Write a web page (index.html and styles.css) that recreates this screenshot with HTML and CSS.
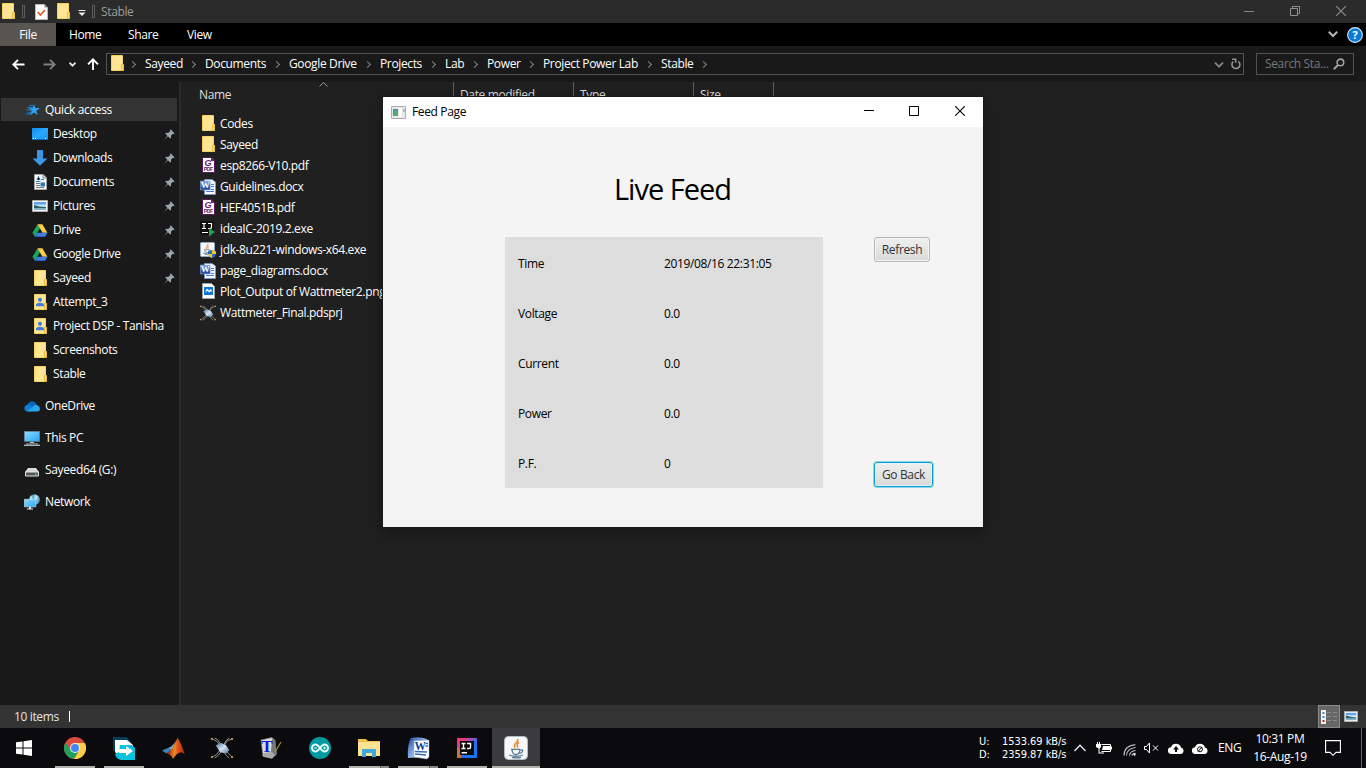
FILE: index.html
```html
<!DOCTYPE html>
<html lang="en">
<head>
<meta charset="utf-8">
<title>Stable</title>
<link rel="stylesheet" href="styles.css">
</head>
<body>
<svg class="defs" width="0" height="0" aria-hidden="true">
  <defs>
    <linearGradient id="gFolder" x1="0" y1="0" x2="1" y2="1"><stop offset="0" stop-color="#ffe38b"/><stop offset="1" stop-color="#ffe79f"/></linearGradient>
    <linearGradient id="gDesk" x1="0" y1="0" x2="1" y2="1"><stop offset="0" stop-color="#0d8cf0"/><stop offset=".5" stop-color="#2aa9ff"/><stop offset="1" stop-color="#1595f5"/></linearGradient>
    <linearGradient id="gScreen" x1="0" y1="0" x2="1" y2="1"><stop offset="0" stop-color="#8fdcff"/><stop offset="1" stop-color="#28a5f5"/></linearGradient>
    <linearGradient id="gWord" x1="0" y1="0" x2="0" y2="1"><stop offset="0" stop-color="#6f9fe6"/><stop offset="1" stop-color="#1f3f8f"/></linearGradient>
    <linearGradient id="gWord2" x1="0" y1="0" x2="1" y2="1"><stop offset="0" stop-color="#28468f"/><stop offset=".45" stop-color="#7ba3dc"/><stop offset="1" stop-color="#e4eefb"/></linearGradient>
    <linearGradient id="gIj" x1="0" y1="0" x2="1" y2="1"><stop offset="0" stop-color="#fc3162"/><stop offset=".3" stop-color="#d6409f"/><stop offset=".55" stop-color="#2e6bf0"/><stop offset="1" stop-color="#087cfa"/></linearGradient>
    <linearGradient id="gMat" x1="0" y1="0" x2="1" y2="0"><stop offset="0" stop-color="#8a1c10"/><stop offset=".45" stop-color="#f08a24"/><stop offset=".6" stop-color="#e5531c"/><stop offset="1" stop-color="#9a2512"/></linearGradient>
    <linearGradient id="gChip" x1="0" y1="0" x2="1" y2="1"><stop offset="0" stop-color="#4a6f97"/><stop offset=".5" stop-color="#d3e4f1"/><stop offset="1" stop-color="#56789b"/></linearGradient>
    <symbol id="folder" viewBox="0 0 13 16"><path fill="url(#gFolder)" stroke="#f4d25f" d="M.5.5h11v9h1v6H.5z"/><path fill="#ffd95e" stroke="#e2b63c" stroke-width=".8" d="M10.4 9.5h2.1v6h-2.1z"/></symbol>
    <symbol id="shared" viewBox="0 0 13 16"><use href="#folder" width="13" height="16"/><circle cx="6" cy="5.8" r="2.1" fill="#3c7de6"/><path fill="#3c7de6" d="M2 12.2V11c0-1.300 2-2.200 4-2.200s4 .9 4 2.200v1.200z"/></symbol>
    <symbol id="star" viewBox="0 0 16 14"><path fill="#2da5f4" d="M9 1l1.300 4H15l-3.800 2.700L12.800 12 9 9.500 5 12.500l1.700-4.600L3.500 5.300h4.300z"/><path stroke="#1c8ae0" stroke-width=".8" d="M2 4.500h6M1 7h6M3 9.300h4M1 11h5M4 2.500h4"/></symbol>
    <symbol id="desktop" viewBox="0 0 16 12"><path fill="url(#gDesk)" d="M0 0h16v12H0z"/><path stroke="#0766bd" d="M0 11.500h16"/><path stroke="#fff" stroke-dasharray="1 1" d="M1 10.500h4m8 0h2"/></symbol>
    <symbol id="down" viewBox="0 0 16 16"><path fill="#3b96e6" d="M5 0h6v8.500h4.500L8 15.700.5 8.500H5z"/></symbol>
    <symbol id="doc" viewBox="0 0 13 16"><path fill="#f7f7f7" stroke="#a5a5a5" d="M.5.500h8.500l3.500 3.500v11.500H.5z"/><path d="M9 .5V4h3.500" fill="#ddd" stroke="#888"/><path stroke="#2580c8" d="M3 6l1.500-3.500L6 6M2 7.500h4.500M7 5.500h3"/><path stroke="#777" d="M2 9.500h4M2 11.500h4M2 13.500h8"/><path fill="#2e78ae" d="M6.500 8.500H11v4H6.500z"/></symbol>
    <symbol id="pic" viewBox="0 0 16 12"><path fill="#f8f8f8" stroke="#adadad" d="M.5.500h15v11H.5z"/><path fill="#62a2ee" d="M2 2h12v3H2z"/><path fill="#c6e2f9" d="M2 4.500h12v2H2z"/><path fill="#285f63" d="M2 5q5 2 12 2v1.500H2z"/><path fill="#83b1c6" d="M2 8h12v2H2z"/></symbol>
    <symbol id="drive" viewBox="0 0 15 13"><path fill="#1ea362" d="M5 .3L0 8.800l2.400 3.900L7.500 4.300z"/><path fill="#ffcf48" d="M5 .3h4.900l5 8.500H10z"/><path fill="#3f7de8" d="M4.900 8.800H15l-2.500 3.900H2.500z"/></symbol>
    <symbol id="cloud" viewBox="0 0 16 11"><path fill="#0a63bd" d="M4 9a4 4 0 0 1-.2-6.200A5 5 0 0 1 12.500 3Q10 9 4 9z"/><path fill="#0f7ed8" d="M3.500 10.500A3.300 3.300 0 0 1 3 4q3-.8 5 1.500l-3 5z"/><path fill="#29a4ee" d="M3 10.500L9.500 5q2-2.300 4.300-.4Q16 5.500 16 8q-.2 2.500-2.800 2.500z"/></symbol>
    <symbol id="pc" viewBox="0 0 16 15"><path fill="url(#gScreen)" stroke="#6f8795" stroke-width=".7" d="M.4.400h15.200v10H.4z"/><path fill="#bac7ce" d="M6 11h4v1H6zM2 12.500h12v.8H2z"/><path fill="#edf3f7" d="M0 13.700h16v1H0z"/></symbol>
    <symbol id="hdd" viewBox="0 0 14 9"><path fill="#d9d9d9" d="M3 0h8l3 4H0z"/><path fill="#555" stroke="#e4e4e4" d="M.5 4h13v4H.5z"/><path fill="#19e84f" d="M10 5.500h1.600v1.400H10z"/></symbol>
    <symbol id="net" viewBox="0 0 16 16"><circle cx="10.500" cy="5.500" r="5.300" fill="#5fa9cf"/><path fill="#b8dce9" d="M7 1.500Q10 4 7 7L5.500 4zM11 .5l3 2-1 4-3-2z"/><path fill="url(#gScreen)" stroke="#d5eaf5" stroke-width=".6" d="M.3 5.300h11.500v7.500H.3z"/><path fill="#dce7ed" d="M5 13h2v1.500h2v1H3v-1h2z"/></symbol>
    <symbol id="pin" viewBox="0 0 11 11"><path fill="#9aa5ac" d="M6.500.3l4.200 4.100-1 .6-.8-.2-2 2 .2 2-.9.8-2.300-2.300L.4 10.800l2.900-4L1.200 4.600l.8-.9 2.200.2 2-1.900-.2-.9z"/></symbol>
    <symbol id="pdf" viewBox="0 0 13 16"><path fill="#fff" stroke="#5c145c" d="M.5.500H9L12.500 4v11.500H.5z"/><path fill="#6a2469" d="M9 0l4 4H9z"/><text x="2.600" y="9" font-family="Liberation Sans" font-size="9" font-weight="700" font-style="italic" fill="#5c145c">G</text><text x="1.800" y="14.400" font-family="Liberation Sans" font-size="5" font-weight="700" fill="#5c145c">PDF</text></symbol>
    <symbol id="word" viewBox="0 0 16 16"><path fill="#f4f8fe" stroke="#7596c7" stroke-width=".8" d="M4.500.500H12L15.500 3v12.500h-11z"/><path stroke="#477dce" d="M11 5.500h3M11 7.500h3M6 12.500h8M11 10.500h3"/><path fill="url(#gWord)" stroke="#aac5ee" stroke-width=".5" d="M.3 2h10v9H.3z"/><text x=".8" y="9.300" font-family="Liberation Serif" font-size="9" font-weight="700" fill="#fff">W</text></symbol>
    <symbol id="ijexe" viewBox="0 0 16 16"><path fill="#101010" d="M0 0h14v14H0z"/><path stroke="#fff" stroke-width="1.200" fill="none" d="M2 2.500h4M4 2.500v5M2 7.500h4M8 2.500h3.500v4q0 1-1.500 1H8M2 11.500h6"/><path fill="#22a447" d="M9 7l6 4-6 4.500z"/></symbol>
    <symbol id="cup" viewBox="0 0 24 24"><path fill="none" stroke="#ec8a33" stroke-width="1.600" d="M13.500 3q1 2-1.500 4t-1 5M15 6.500q-3 1.500-1 5"/><path fill="none" stroke="#577a98" stroke-width="1.300" d="M7 13.300h9M8 13.500q.5 5 4 5t4-5M16.500 14q3-.5 2 1.500t-3 1.500M5 19q7 2.500 14 0M8 21.300q5 1 9 0"/></symbol>
    <symbol id="jdk" viewBox="0 0 16 16"><rect x=".5" y=".5" width="14" height="14" rx="1" fill="#f4f7f9" stroke="#94adbd"/><use href="#cup" width="14" height="14"/><path fill="#1f71c5" d="M12 8l4 1.500V12q-1 3-4 4-3-1-4-4V9.500z"/><path fill="#f5c62d" d="M12 8v4h4V9.500zM12 12v4q-3-1-4-4z"/></symbol>
    <symbol id="png" viewBox="0 0 13 16"><path fill="#fff" stroke="#a1a1a1" d="M.5.500H9.500l3 3v12H.5z"/><path fill="#0b79d3" d="M2 4h9v8H2z"/><path fill="#fff" d="M3 9l2-3.500 2 2L9 6l1.500 3-1.500-1L7.500 9.500 5.500 8z"/></symbol>
    <symbol id="proteus" viewBox="0 0 24 24"><path fill="none" stroke="#a9a9a5" stroke-width=".9" d="M1 2Q7 4 9 8M4 1q5 2 6 7M23 2q-6 1-8 6M20 1q-5 3-6 8M1 22q6-2 8-7M4 23q5-3 7-7M23 22q-4-5-8-7M20 23q-4-3-6-7"/><path fill="url(#gChip)" d="M5 9l6-2.500 5 2 4 6-4 3.500-6-1.500z"/><path fill="#d59d51" d="M0 1h2v2H0zM22 1h2v2h-2zM0 21h2v2H0zM22 21h2v2h-2z"/></symbol>
  </defs>
</svg>

<div class="screen">
  <header class="titlebar">
    <svg class="tb-folder" width="13" height="16"><use href="#folder"/></svg>
    <i class="bar"></i>
    <svg class="tb-check" width="13" height="16" viewBox="0 0 13 16"><path fill="#fff" stroke="#bcbcbc" d="M.5.500h9l3 3v12H.5z"/><path d="M9.500 0v3.500H13" fill="#888"/><path fill="none" stroke="#e85a22" stroke-width="1.800" d="M2.800 8l2.500 3 4.700-5"/></svg>
    <svg class="tb-folder2" width="13" height="16"><use href="#folder"/></svg>
    <svg class="tb-drop" width="8" height="6" viewBox="0 0 8 6"><path fill="#ededed" d="M.5 0h7v1h-7zM.5 2.500h7L4 6z"/></svg>
    <i class="bar"></i>
    <span class="tb-title">Stable</span>
    <div class="winctl">
      <svg width="10" height="10" viewBox="0 0 10 10"><path stroke="#858585" d="M0 5.500h10"/></svg>
      <svg width="10" height="10" viewBox="0 0 10 10" fill="none" stroke="#909090"><path d="M.5 2.500h7v7h-7zM2.500 2.500v-2h7v7h-2"/></svg>
      <svg width="10" height="10" viewBox="0 0 10 10"><path stroke="#909090" stroke-width="1.100" d="M0 0l10 10M10 0L0 10"/></svg>
    </div>
  </header>
  <nav class="menu">
    <span class="m-file">File</span><span class="m-home">Home</span><span class="m-share">Share</span><span class="m-view">View</span>
    <div class="m-right">
      <svg width="10" height="7" viewBox="0 0 10 7"><path fill="none" stroke="#b5b5b5" stroke-width="2" d="M.8.800L5 5 9.200.800"/></svg>
      <svg width="16" height="16" viewBox="0 0 16 16"><circle cx="8" cy="8" r="7.400" fill="#0b7ad5" stroke="#d5e7f5" stroke-width="1.100"/><text x="8" y="12" text-anchor="middle" font-family="Open Sans" font-weight="700" font-size="11" fill="#fff">?</text></svg>
    </div>
  </nav>
  <div class="navbar">
    <div class="arrows">
      <svg width="13" height="11" viewBox="0 0 13 11" fill="none" stroke="#fff" stroke-width="1.900"><path d="M12.500 5.500H1.500M6 .8L1.300 5.500 6 10.200"/></svg>
      <svg width="13" height="11" viewBox="0 0 13 11" fill="none" stroke="#7f7f7f" stroke-width="1.900"><path d="M.5 5.500h11M7 .8l4.700 4.700L7 10.200"/></svg>
      <svg width="7" height="5" viewBox="0 0 7 5" fill="none" stroke="#e5e5e5" stroke-width="1.700"><path d="M.5.700l3 3 3-3"/></svg>
      <svg width="12" height="12" viewBox="0 0 12 12" fill="none" stroke="#fff" stroke-width="1.900"><path d="M6 12V1.500M1 6.300l5-5 5 5"/></svg>
    </div>
    <div class="address">
      <svg class="ad-folder" width="13" height="16"><use href="#folder"/></svg>
      <i class="chev"></i>
      <div class="crumbs">
        <span>Sayeed<i class="chev"></i></span><span>Documents<i class="chev"></i></span><span>Google Drive<i class="chev"></i></span><span>Projects<i class="chev"></i></span><span>Lab<i class="chev"></i></span><span>Power<i class="chev"></i></span><span>Project Power Lab<i class="chev"></i></span><span>Stable<i class="chev"></i></span>
      </div>
      <svg class="ad-down" width="10" height="6" viewBox="0 0 10 6"><path fill="none" stroke="#858585" stroke-width="1.800" d="M1 .7l4 4 4-4"/></svg>
      <svg class="ad-ref" width="10" height="12" viewBox="0 0 10 12"><path fill="none" stroke="#919191" stroke-width="1.600" d="M7.300 3.300A4 4 0 1 1 2.300 3.500M1 1.200h3.700v3.600"/></svg>
    </div>
    <div class="search"><span>Search Sta...</span><svg width="12" height="12" viewBox="0 0 12 12"><circle cx="7.400" cy="4.400" r="3.300" fill="none" stroke="#a0a0a0" stroke-width="1.600"/><path stroke="#a0a0a0" stroke-width="2" d="M5 7L.8 11.200"/></svg></div>
  </div>

  <main class="main">
    <aside class="side">
      <div class="row root sel"><svg width="16" height="14"><use href="#star"/></svg><span>Quick access</span></div>
      <div class="row"><svg width="16" height="12"><use href="#desktop"/></svg><span>Desktop</span><svg class="pin" width="11" height="11"><use href="#pin"/></svg></div>
      <div class="row"><svg width="16" height="16"><use href="#down"/></svg><span>Downloads</span><svg class="pin" width="11" height="11"><use href="#pin"/></svg></div>
      <div class="row"><svg class="slim" width="13" height="16"><use href="#doc"/></svg><span>Documents</span><svg class="pin" width="11" height="11"><use href="#pin"/></svg></div>
      <div class="row"><svg width="16" height="12"><use href="#pic"/></svg><span>Pictures</span><svg class="pin" width="11" height="11"><use href="#pin"/></svg></div>
      <div class="row"><svg width="16" height="13"><use href="#drive"/></svg><span>Drive</span><svg class="pin" width="11" height="11"><use href="#pin"/></svg></div>
      <div class="row"><svg width="16" height="13"><use href="#drive"/></svg><span>Google Drive</span><svg class="pin" width="11" height="11"><use href="#pin"/></svg></div>
      <div class="row"><svg class="slim" width="13" height="16"><use href="#folder"/></svg><span>Sayeed</span><svg class="pin" width="11" height="11"><use href="#pin"/></svg></div>
      <div class="row"><svg class="slim" width="13" height="16"><use href="#shared"/></svg><span>Attempt_3</span></div>
      <div class="row"><svg class="slim" width="13" height="16"><use href="#shared"/></svg><span>Project DSP - Tanisha</span></div>
      <div class="row"><svg class="slim" width="13" height="16"><use href="#folder"/></svg><span>Screenshots</span></div>
      <div class="row"><svg class="slim" width="13" height="16"><use href="#folder"/></svg><span>Stable</span></div>
      <div class="row root gap"><svg width="16" height="11"><use href="#cloud"/></svg><span>OneDrive</span></div>
      <div class="row root gap"><svg width="16" height="15"><use href="#pc"/></svg><span>This PC</span></div>
      <div class="row root gap"><svg class="low" width="16" height="9"><use href="#hdd"/></svg><span>Sayeed64 (G:)</span></div>
      <div class="row root gap"><svg width="16" height="16"><use href="#net"/></svg><span>Network</span></div>
    </aside>
    <section class="files">
      <div class="cols">
        <span class="c-name">Name</span><span>Date modified</span><span>Type</span><span class="c-size">Size</span>
        <svg class="sort" width="9" height="5" viewBox="0 0 9 5"><path fill="none" stroke="#9a9a9a" d="M.5 4.500l4-4 4 4"/></svg>
      </div>
      <div class="list">
        <div class="file"><svg class="slim" width="13" height="16"><use href="#folder"/></svg><span>Codes</span></div>
        <div class="file"><svg class="slim" width="13" height="16"><use href="#folder"/></svg><span>Sayeed</span></div>
        <div class="file"><svg class="slim" width="13" height="16"><use href="#pdf"/></svg><span>esp8266-V10.pdf</span></div>
        <div class="file"><svg width="16" height="16"><use href="#word"/></svg><span>Guidelines.docx</span></div>
        <div class="file"><svg class="slim" width="13" height="16"><use href="#pdf"/></svg><span>HEF4051B.pdf</span></div>
        <div class="file"><svg width="16" height="16"><use href="#ijexe"/></svg><span>ideaIC-2019.2.exe</span></div>
        <div class="file"><svg width="16" height="16"><use href="#jdk"/></svg><span>jdk-8u221-windows-x64.exe</span></div>
        <div class="file"><svg width="16" height="16"><use href="#word"/></svg><span>page_diagrams.docx</span></div>
        <div class="file"><svg class="slim" width="13" height="16"><use href="#png"/></svg><span>Plot_Output of Wattmeter2.png</span></div>
        <div class="file"><svg width="16" height="16"><use href="#proteus"/></svg><span>Wattmeter_Final.pdsprj</span></div>
      </div>
    </section>
  </main>

  <footer class="status">
    <span>10 items</span><i></i>
    <div class="views">
      <span class="v-on"><svg width="18" height="14" viewBox="0 0 18 14"><path fill="#f2f2f2" d="M1 0h5v14H1z"/><path fill="#4d80b5" d="M2.500 2h2v2h-2z"/><path fill="#3891df" d="M2.500 6h2v2h-2z"/><path fill="#c62525" d="M2.500 10h2v2h-2z"/><path stroke="#8b8b8b" d="M7 2.500h4M7 6.500h4M7 10.500h4M13 2.500h4M13 6.500h4M13 10.500h4"/></svg></span>
      <svg width="14" height="11" viewBox="0 0 16 12" preserveAspectRatio="none"><use href="#pic" width="16" height="12"/></svg>
    </div>
  </footer>

  <footer class="taskbar">
    <div class="start"><svg width="16" height="16" viewBox="0 0 16 16"><path fill="#fff" d="M0 2.300l6.500-.9v6.100H0zM7.500 1.200L16 0v7.500H7.500zM0 8.500h6.500v6.100L0 13.700zM7.500 8.500H16V16l-8.500-1.200z"/></svg></div>
    <div class="app run"><svg width="22" height="22" viewBox="0 0 22 22"><circle cx="11" cy="11" r="11" fill="#dd4b3e"/><path fill="#1fa15d" d="M1.500 5.500A11 11 0 0 0 10 22l5-8.500-8 0z"/><path fill="#fecf45" d="M11.500 6H20.800A11 11 0 0 1 10 22l5.500-9z"/><circle cx="11" cy="11" r="5" fill="#f3f3f3"/><circle cx="11" cy="11" r="4" fill="#4486f1"/></svg></div>
    <div class="app run"><svg width="23" height="23" viewBox="0 0 23 23"><path fill="#063d5b" d="M0 0h14l4 5-8 9H0z"/><path fill="#fff" d="M2 3h12l6 5v8L7 20l-5-5z"/><path fill="#05c3dd" d="M7 8h12l3 3v12H8q-5-1-6-6l4-2z"/><path fill="#fff" d="M6 12h7V9l7 5-7 5v-3H6z"/></svg></div>
    <div class="app"><svg width="23" height="21" viewBox="0 0 23 21"><path fill="#3e83b7" d="M0 12.500l7-3 2.500 2-5 4z"/><path fill="#7cb5d5" d="M7 9.500q4-1 7-8l-4 11z"/><path fill="url(#gMat)" d="M4.500 15.500Q10 13 15.500 0q3 3 7.500 17-3-4-6-2-3 1-6 6-2-5-6.500-5.500z"/></svg></div>
    <div class="app"><svg width="22" height="22"><use href="#proteus"/></svg></div>
    <div class="app"><svg width="22" height="22" viewBox="0 0 22 22"><path fill="#dcdcdc" stroke="#777" stroke-width=".7" d="M1 3l11-2.500 3 3 1 14-4 4-9-2z"/><path fill="#777" d="M12 1l3 3 2 13-5 4-1-6z"/><path fill="#a9a9a9" d="M3 16l9-1 3 3-3 3-8-2z"/><text x="1.300" y="14.500" font-family="Liberation Serif" font-weight="700" font-size="17" fill="#1517e8">T</text><path stroke="#a39a3a" stroke-width="1.100" d="M15 15l6-10"/></svg></div>
    <div class="app"><svg width="22" height="22" viewBox="0 0 22 22"><circle cx="11" cy="11" r="11" fill="#009aa0"/><g fill="none" stroke="#e4fbfb" stroke-width="2"><path d="M11 11Q8.500 7.500 6.500 7.500a3.500 3.500 0 0 0 0 7q2 0 4.500-3.500t4.500-3.500a3.500 3.500 0 0 1 0 7q-2 0-4.500-3.500"/></g><path stroke="#e4fbfb" d="M5 11h3M14 11h3M15.500 9.500v3"/></svg></div>
    <div class="app run multi"><svg width="22" height="20" viewBox="0 0 22 20"><path fill="#efc04c" d="M0 1h8l2 2h12v6H0z"/><path fill="#ffe393" d="M0 4h22v14H0z"/><path fill="#3ea8df" d="M4 11h14v8h-4v-4H8v4H4z"/></svg></div>
    <div class="app run multi"><svg width="23" height="23" viewBox="0 0 23 23"><path fill="url(#gWord2)" d="M4 1q8-2 16 1l-4 18-15 1Q0 8 4 1z"/><path fill="#fff" stroke="#8ba9d5" stroke-width=".5" d="M7 4l15-1v17l-2 2-13-2z"/><text x="7.500" y="12.500" font-family="Liberation Serif" font-weight="700" font-size="11.500" fill="#173b8c">W</text><path stroke="#376bb4" stroke-width="1.300" d="M18.500 6.500H21M18.500 9H21M8 14.500l12 .5M8 17l11 1"/></svg></div>
    <div class="app run"><svg width="20" height="20" viewBox="0 0 20 20"><path fill="url(#gIj)" d="M0 0h20v20H0z"/><path fill="#c5753f" d="M0 9l4 3v8H0z"/><path fill="#0a0a0a" d="M3 3h14v14H3z"/><path stroke="#fff" stroke-width="1.400" fill="none" d="M4.500 5.500h4M6.500 5.500v5M4.500 10.500h4M10 5.500h3.500v4q0 1-1.500 1h-2M4.500 14.800h5.500"/></svg></div>
    <div class="app active"><svg width="24" height="24" viewBox="0 0 24 24"><rect x=".5" y=".5" width="23" height="23" rx="4" fill="#f7f8f9" stroke="#b3bcc3"/><use href="#cup" width="24" height="24"/></svg></div>
    <div class="tray">
      <div class="speed"><span>U:</span><span>1533.69 kB/s</span><span>D:</span><span>2359.87 kB/s</span></div>
      <svg class="t-up" width="12" height="8" viewBox="0 0 12 8"><path fill="none" stroke="#eee" stroke-width="1.300" d="M.5 7L6 1.300 11.500 7"/></svg>
      <svg class="t-bat" width="17" height="12" viewBox="0 0 17 12"><path fill="none" stroke="#fff" d="M5.500 2.500h9v7h-9M15.500 4.500v3"/><path fill="#fff" d="M7 4h7v4H6zM0 2h5v3L3.500 6.500v4H8v1H2.500v-5L0 5zM1 0h1v2H1zM3 0h1v2H3z"/></svg>
      <svg class="t-wifi" width="13" height="12" viewBox="0 0 13 12"><g fill="none" stroke="#c4c4c4" stroke-width="1.100"><path d="M1 11.500Q1 1.500 12.500.700M3.500 11.500Q4 4.500 12.500 3.500M6.500 11.500Q7 7 12.500 6.500M9 11.500q0-2 3.500-2.300"/></g><path fill="#fff" d="M10.500 9.500h2v2h-2z"/></svg>
      <svg class="t-vol" width="15" height="12" viewBox="0 0 15 12"><path fill="none" stroke="#fff" d="M.5 4.500h2l3-3.500v10l-3-3.500h-2zM9 3.500l5 5M14 3.500l-5 5"/></svg>
      <svg class="t-c1" width="16" height="11" viewBox="0 0 16 11"><path fill="#fff" d="M3.500 11A3.400 3.400 0 0 1 3 4.200 5.300 5.300 0 0 1 13 4.500a3.300 3.300 0 0 1-.5 6.500z"/><path fill="#111" d="M8 3l3 3.500H9V9H7V6.500H5z"/></svg>
      <svg class="t-c2" width="16" height="11" viewBox="0 0 16 11"><path fill="#fff" d="M3.500 11A3.400 3.400 0 0 1 3 4.200 5.300 5.300 0 0 1 13 4.500a3.300 3.300 0 0 1-.5 6.500z"/><g fill="none" stroke="#111" stroke-width="1"><circle cx="8" cy="6.300" r="2.500"/><path d="M6 8.500l4-4.500"/></g></svg>
      <span class="lang">ENG</span>
      <div class="clock"><span>10:31 PM</span><span>16-Aug-19</span></div>
      <svg class="t-note" width="16" height="16" viewBox="0 0 16 16"><path fill="none" stroke="#fff" stroke-width="1.100" d="M.6.600h14.800v11.800H11L8 15.300l-3-2.900H.6z"/></svg>
    </div>
  </footer>

  <div class="dialog">
    <div class="d-title">
      <svg width="15" height="13" viewBox="0 0 15 13"><path fill="#e8e8e8" stroke="#a9adb2" d="M.5.500h14v12H.5z"/><path fill="#4b96a0" d="M2 3h5v7H2z"/><path fill="#56ab79" d="M4 5h3v5H2z"/><path fill="#fff" d="M8 2h3v9H8z"/><path fill="#8db9b8" d="M12 3h1.500v3H12z"/></svg>
      <span>Feed Page</span>
      <div class="d-ctl">
        <svg width="10" height="10" viewBox="0 0 10 10"><path stroke="#000" d="M0 4.500h10"/></svg>
        <svg width="10" height="10" viewBox="0 0 10 10"><path fill="none" stroke="#000" d="M.5.500h9v9h-9z"/></svg>
        <svg class="d-close" width="10" height="10" viewBox="0 0 10 10"><path stroke="#000" stroke-width="1.100" d="M0 0l10 10M10 0L0 10"/></svg>
      </div>
    </div>
    <div class="d-body">
      <h1>Live Feed</h1>
      <div class="d-cols">
        <div class="panel">
          <span>Time</span><span>2019/08/16 22:31:05</span>
          <span>Voltage</span><span>0.0</span>
          <span>Current</span><span>0.0</span>
          <span>Power</span><span>0.0</span>
          <span>P.F.</span><span>0</span>
        </div>
        <div class="btns"><button class="b-ref">Refresh</button><button class="b-back">Go Back</button></div>
      </div>
    </div>
  </div>
</div>
</body>
</html>
```
FILE: styles.css
```css
* { box-sizing: border-box; }
body { margin: 0; background: #202020; font: 12px/16px "Open Sans", "Noto Sans", sans-serif; letter-spacing: -0.36px; color: #fff; white-space: nowrap; }
svg { display: block; flex: none; }
.defs { position: absolute; }
.screen { position: relative; width: 1366px; height: 768px; overflow: hidden; display: flex; flex-direction: column; }

.titlebar { height: 23px; flex: none; background: #2b2b2b; display: flex; align-items: center; padding-left: 2px; }
.titlebar .bar { width: 3px; height: 13px; border: 1px solid #5c5c5c; margin-left: 7px; }
.tb-folder, .tb-folder2 { margin-top: -1px; }
.tb-check { margin-left: 10px; }
.tb-folder2 { margin-left: 9px; }
.tb-drop { margin: 3px 0 0 8px; }
.tb-title { color: #9c9c9c; margin-left: 6px; }
.titlebar .tb-drop + .bar { margin-left: 6px; }
.winctl { margin-left: auto; display: flex; gap: 36px; padding-right: 20px; margin-top: -2px; }

.menu { height: 23px; flex: none; background: #000; display: flex; align-items: center; }
.m-file { width: 56px; line-height: 23px; background: #595652; text-align: center; }
.m-home { margin-left: 13px; width: 59px; }
.m-share { width: 59px; }
.m-right { margin-left: auto; display: flex; gap: 9px; align-items: center; padding-right: 3px; }

.navbar { height: 36px; flex: none; background: #191919; display: flex; align-items: center; }
.arrows { width: 106px; display: flex; align-items: center; padding-left: 12px; }
.arrows svg:nth-child(2) { margin-left: 18px; }
.arrows svg:nth-child(3) { margin-left: 13px; }
.arrows svg:nth-child(4) { margin-left: 11px; }
.address { width: 1138px; height: 22px; border: 1px solid #535353; display: flex; align-items: center; }
.ad-folder { margin-left: 4px; margin-top: -2px; }
.address > .chev { margin-left: 6px; }
.chev { flex: none; width: 5px; height: 5px; border: solid #858585; border-width: 1.500px 1.500px 0 0; transform: rotate(45deg); }
.crumbs { display: grid; grid-template-columns: 60px 84px 91px 65px 42px 56px 118px 48px; margin-left: 10px; }
.crumbs span { display: flex; align-items: center; justify-content: space-between; padding-right: 10px; }
.crumbs span:last-child { padding-right: 3px; }
.ad-down { margin-left: auto; margin-right: 7px; margin-top: 2px; }
.ad-ref { margin-right: 2px; }
.search { width: 98px; height: 22px; margin-left: 12px; border: 1px solid #535353; color: #777; display: flex; align-items: center; justify-content: space-between; padding: 0 8px; }

.main { height: 623px; flex: none; display: flex; }
.side { width: 181px; flex: none; background: #191919; border-right: 2px solid #2b2b2b; padding-top: 16px; }
.row { height: 24px; display: flex; align-items: center; padding-left: 32px; padding-right: 4px; }
.row span { margin-left: 5px; }
.row.root { padding-left: 24px; }
.row.sel { margin: 0 2px 1px 1px; background: #333; height: 23px; }
.row.sel span { margin-left: 4px; }
.row.gap { margin-top: 8px; }
.row .pin { margin-left: auto; }
.row .low { margin-top: 4px; }
.slim { margin: 0 1px 0 2px; }
.files { flex: 1; }
.cols { position: relative; height: 26px; display: grid; grid-template-columns: 273px 120px 120px 80px; color: #dedede; line-height: 25px; }
.cols span { border-right: 1px solid #5e5e5e; padding-left: 6px; }
.cols .c-name { padding-left: 18px; }
.sort { position: absolute; left: 138px; top: 0; }
.list { padding: 5px 0 0 19px; }
.file { height: 21px; display: flex; align-items: center; }
.file span { margin-left: 4px; }
.file .slim { margin-top: -1px; }

.status { height: 23px; flex: none; background: #333; display: flex; align-items: center; padding-left: 14px; color: #e6e6e6; }
.status > i { width: 1px; height: 11px; background: #fff; margin-left: 10px; }
.views { margin-left: auto; display: flex; align-items: center; gap: 4px; padding-right: 8px; }
.v-on { width: 22px; height: 23px; border: 1px solid #8a8a8a; background: #666; display: flex; align-items: center; justify-content: center; }

.taskbar { height: 40px; flex: none; background: #0b0b0e; display: flex; }
.start { width: 51px; padding: 12px 0 0 16px; }
.app { position: relative; width: 48px; height: 40px; margin-right: 1px; display: flex; align-items: center; justify-content: center; }
.app.run::after { content: ""; position: absolute; left: 4px; right: 4px; bottom: 0; height: 2px; background: #b4b1aa; }
.app.multi::after { background: linear-gradient(90deg, #b4b1aa 31px, #55544f 31px, #55544f 32px, #8b8983 32px); }
.app.active { background: #3b3b3d; box-shadow: inset 0 -2px #b4b1aa; }
.tray { margin: 0 4px 0 auto; display: flex; align-items: center; height: 40px; width: 383px; border-right: 1px solid #666; }
.speed { display: grid; grid-template-columns: 23px 66px; font: 11px/13px "DejaVu Sans Condensed", "DejaVu Sans", sans-serif; letter-spacing: -0.05px; }
.t-up { margin-left: 6px; }
.t-bat { margin-left: 10px; }
.t-wifi { margin-left: 10px; margin-top: 3px; }
.t-vol { margin-left: 8px; }
.t-c1 { margin-left: 9px; }
.t-c2 { margin-left: 8px; }
.lang { margin-left: 10px; width: 24px; }
.clock { width: 56px; margin-left: 10px; display: flex; flex-direction: column; align-items: center; line-height: 18px; }
.t-note { margin-left: 17px; }

.dialog { position: absolute; left: 383px; top: 97px; width: 600px; height: 430px; background: #f4f4f4; color: #000; box-shadow: 0 0 0 1px #191919, 0 4px 14px rgba(0,0,0,.4); }
.d-title { height: 30px; background: #fff; display: flex; align-items: center; padding: 0 18px 0 8px; }
.d-title span { margin-left: 6px; }
.d-ctl { margin: -2px 0 0 auto; display: flex; gap: 35px; }
.d-close { margin-left: 1px; }
.d-body h1 { margin: 0; padding: 39px 21px 0 0; height: 110px; text-align: center; font-size: 29px; line-height: 46px; font-weight: 400; letter-spacing: -1px; }
.d-cols { display: flex; padding-left: 122px; }
.panel { width: 318px; height: 251px; background: #ddd; padding: 2px 0 0 13px; display: grid; grid-template-columns: 146px 1fr; grid-auto-rows: 50px; line-height: 50px; }
.btns { margin-left: 51px; height: 250px; display: flex; flex-direction: column; justify-content: space-between; align-items: flex-start; }
.btns button { height: 25px; padding: 0; border: 1px solid #b5b5b5; border-radius: 3px; background: linear-gradient(#efefef, #d9d9d9); box-shadow: inset 0 0 0 1px #f5f5f5; font: inherit; letter-spacing: inherit; color: #333; }
.btns .b-ref { width: 56px; }
.btns .b-back { width: 59px; border-color: #039ed3; box-shadow: 0 0 0 1px #8fd3ec, inset 0 0 0 1px #e9f4f8; }
```
